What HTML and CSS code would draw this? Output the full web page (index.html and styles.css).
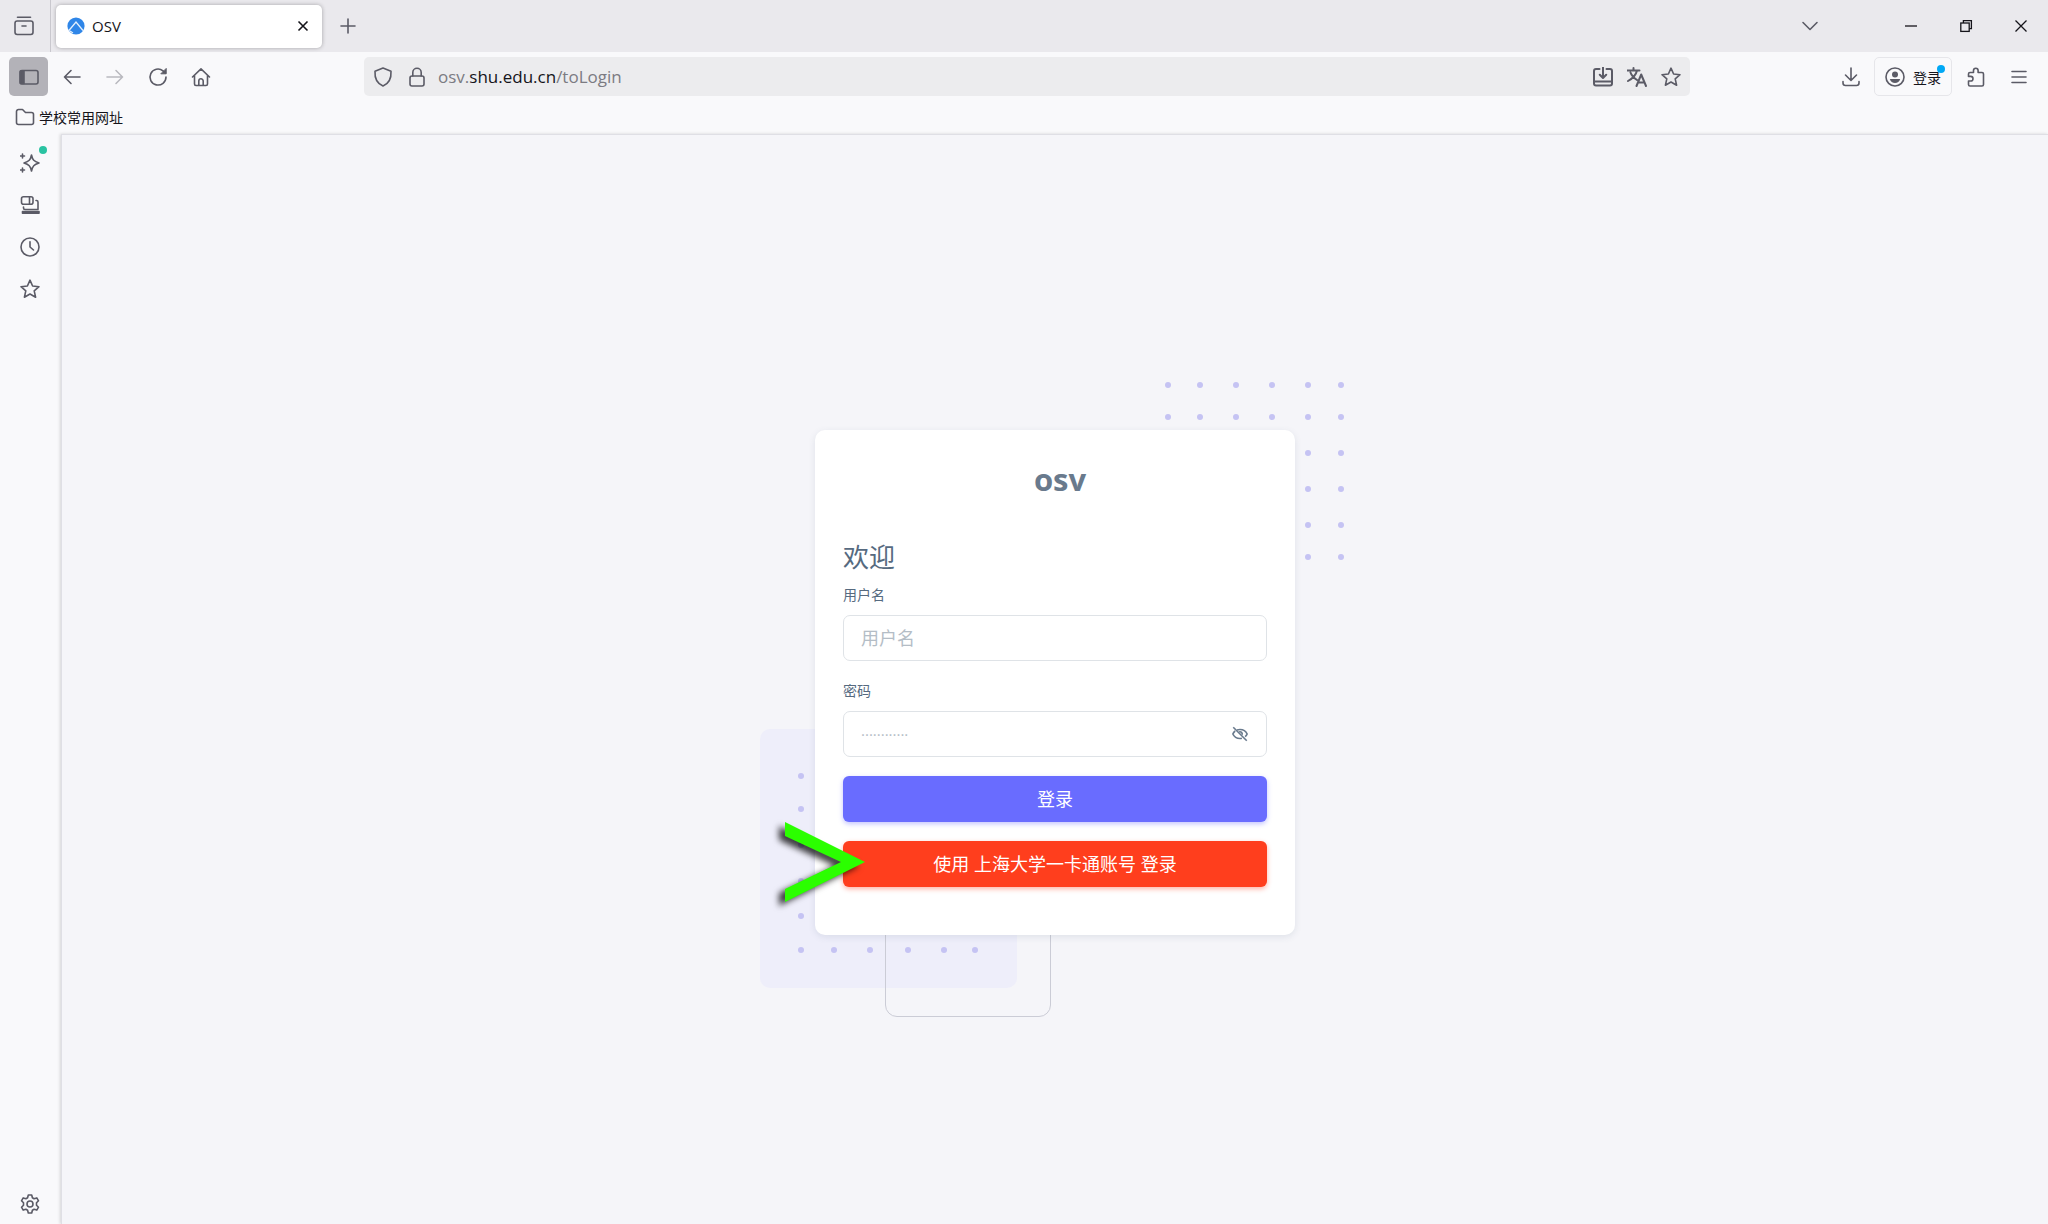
FILE: index.html
```html
<!DOCTYPE html>
<html lang="zh-CN">
<head>
  <meta charset="UTF-8">
  <meta name="viewport" content="width=device-width, initial-scale=1.0">
  <title>OSV</title>
  <link rel="stylesheet" href="styles.css">
</head>
<body>
  <header class="browser">
    <div class="tab-strip">
      <button class="tool-btn view-btn" aria-label="Firefox View">
        <svg class="icon" viewBox="0 0 20 20"><path d="M3.5 1.2h13"/><rect x="1" y="5" width="18" height="13.5" rx="2.2"/><path d="M8 10h4"/></svg>
      </button>
      <div class="tab">
        <svg class="favicon" viewBox="0 0 18 18"><circle cx="9" cy="9" r="8.6" fill="#2f86e8"/><path d="M1.5 14L9 5l7 8.5M6 16l-3-2" fill="none" stroke="#e4f0fd" stroke-width="1.3"/></svg>
        <span class="tab-title">OSV</span>
        <button class="tab-close" aria-label="Close tab">
          <svg viewBox="0 0 12 12"><path d="M1.5 1.5l9 9M10.5 1.5l-9 9"/></svg>
        </button>
      </div>
      <button class="tool-btn" aria-label="New tab">
        <svg class="icon" viewBox="0 0 20 20"><path d="M10 3v14M3 10h14"/></svg>
      </button>
      <button class="tool-btn list-btn" aria-label="List all tabs">
        <svg class="icon" viewBox="0 0 20 20"><path d="M3 6.5l7 7 7-7"/></svg>
      </button>
      <div class="window-btns">
        <button aria-label="Minimize"><svg viewBox="0 0 14 14"><path d="M1 7h12"/></svg></button>
        <button aria-label="Restore"><svg viewBox="0 0 14 14"><rect x="1.8" y="4" width="8.4" height="8.4"/><path d="M4.4 4V1.6h8v8h-2.2"/></svg></button>
        <button aria-label="Close"><svg viewBox="0 0 14 14"><path d="M1.5 1.5l11 11M12.5 1.5l-11 11"/></svg></button>
      </div>
    </div>

    <div class="toolbar">
      <nav class="nav-btns">
        <button class="tool-btn active" aria-label="Sidebar">
          <svg class="icon" viewBox="0 0 20 20"><rect x="1" y="3.5" width="18" height="13.5" rx="2"/><path d="M1.5 4H5v12.5H1.5z" fill="#5b5b66"/></svg>
        </button>
        <button class="tool-btn" aria-label="Back">
          <svg class="icon" viewBox="0 0 20 20"><path d="M18 10H2.5M9 3.500L2.500 10 9 16.500"/></svg>
        </button>
        <button class="tool-btn" aria-label="Forward" disabled>
          <svg class="icon" viewBox="0 0 20 20"><path d="M2 10h15.5M11 3.500l6.500 6.500-6.500 6.500"/></svg>
        </button>
        <button class="tool-btn" aria-label="Reload">
          <svg class="icon" viewBox="0 0 20 20"><path d="M18 10a8 8 0 1 1-3-6.200l2.500 2.200"/><path d="M18.2 1.8v5h-5z" fill="#5b5b66" stroke-width="1"/></svg>
        </button>
        <button class="tool-btn" aria-label="Home">
          <svg class="icon" viewBox="0 0 20 20"><path d="M1.5 10L10 1.8l8.5 8.200M3.500 8.500V17A1.500 1.500 0 0 0 5 18.500h10a1.500 1.500 0 0 0 1.500-1.500V8.500M7.800 18.500V14a2.200 2.200 0 0 1 4.400 0v4.500"/></svg>
        </button>
      </nav>
      <div class="url-bar">
        <svg class="icon" viewBox="0 0 20 20"><path d="M10 1L2 4.200c-.4 6.500 1.500 12 8 14.800 6.500-2.800 8.400-8.300 8-14.800z"/></svg>
        <svg class="icon" viewBox="0 0 20 20"><rect x="3" y="9" width="14" height="10" rx="2"/><path d="M5.800 9V5.500a4.200 4.200 0 0 1 8.400 0V9"/></svg>
        <div class="url">osv.<b>shu.edu.cn</b>/toLogin</div>
        <button class="url-btn" aria-label="Install"><svg class="icon bold" viewBox="0 0 20 20"><path d="M6.500 2H3a2 2 0 0 0-2 2v12.500a2 2 0 0 0 2 2h14a2 2 0 0 0 2-2V4a2 2 0 0 0-2-2h-3.500M1 14.500h18M10 .5v10M6.800 7.800L10 11l3.200-3.200"/></svg></button>
        <button class="url-btn" aria-label="Translate"><svg class="icon bold" viewBox="0 0 20 20"><path d="M.5 3.500h12M6.500 1v2.500M10 3.500C9 8 5.500 11.500 1 14M3.500 5.500c1 3 3.500 5.500 6.500 7.500M9.500 19l4.700-11.500L19 19M11 15.500h6.500"/></svg></button>
        <button class="url-btn" aria-label="Bookmark"><svg class="icon" viewBox="0 0 20 20"><path d="M10 1.200l2.600 5.800 6.400.7-4.800 4.200 1.400 6.300L10 15l-5.600 3.200 1.400-6.300L1 7.700 7.400 7z"/></svg></button>
      </div>
      <div class="menu-btns">
        <button class="tool-btn" aria-label="Downloads"><svg class="icon" viewBox="0 0 20 20"><path d="M10 1v12M4.500 8l5.500 5.500L15.500 8M2 14.500V16a2.500 2.500 0 0 0 2.500 2.500h11A2.500 2.500 0 0 0 18 16v-1.500"/></svg></button>
        <button class="account-btn">
          <svg class="icon" viewBox="0 0 20 20"><circle cx="10" cy="10" r="9"/><circle cx="10" cy="7.500" r="3" fill="#5b5b66" stroke="none"/><path d="M4.800 12h10.400c-.7 2.800-2.800 4-5.200 4s-4.500-1.200-5.200-4z" fill="#5b5b66" stroke="none"/></svg>
          <span>登录</span>
          <i class="dot"></i>
        </button>
        <button class="tool-btn" aria-label="Extensions"><svg class="icon" viewBox="0 0 20 20"><path d="M2.500 8.500V7A1.500 1.500 0 0 1 4 5.500h3.500v-2a2.300 2.300 0 0 1 4.600 0v2H16A1.500 1.500 0 0 1 17.500 7v10.500A1.500 1.500 0 0 1 16 19H4a1.500 1.500 0 0 1-1.500-1.500V14h2.200a2.300 2.300 0 0 0 0-4.600H2.500z"/></svg></button>
        <button class="tool-btn" aria-label="Menu"><svg class="icon" viewBox="0 0 20 20"><path d="M3 4.500h14M3 10h14M3 15.500h14"/></svg></button>
      </div>
    </div>

    <div class="bookmarks">
      <a href="#" class="bookmark">
        <svg class="icon" viewBox="0 0 20 20"><path d="M1.500 15.500v-11a2 2 0 0 1 2-2h4l3 3h6a2 2 0 0 1 2 2v8a2 2 0 0 1-2 2h-13a2 2 0 0 1-2-2z"/></svg>
        <span>学校常用网址</span>
      </a>
    </div>
  </header>

  <div class="window">
    <aside class="sidebar">
      <button class="side-btn" aria-label="AI chat">
        <svg class="icon" viewBox="0 0 20 20"><path d="M11.500 2c1 5 2.500 6.500 7.500 8-5 1.500-6.500 3-7.500 8-1-5-2.500-6.500-7.500-8 5-1.500 6.500-3 7.500-8zM2.500 1v4M.5 3h4M2.500 15v4M.5 17h4"/></svg>
        <i class="dot green"></i>
      </button>
      <button class="side-btn" aria-label="Synced tabs">
        <svg class="icon" viewBox="0 0 20 20"><rect x="1.500" y="1.800" width="11.500" height="7.500" rx="2"/><path d="M9.500 2v7M16 5.500h.5A1.500 1.500 0 0 1 18 7v7.500H5a1.500 1.500 0 0 1-1.500-1.500v-1"/><path d="M2.500 16.500h16.500v1.800H2.500z" fill="#5b5b66"/></svg>
      </button>
      <button class="side-btn" aria-label="History">
        <svg class="icon" viewBox="0 0 20 20"><circle cx="10" cy="10" r="9"/><path d="M10 4.800V10l3.500 3"/></svg>
      </button>
      <button class="side-btn" aria-label="Bookmarks">
        <svg class="icon" viewBox="0 0 20 20"><path d="M10 1.200l2.600 5.800 6.400.7-4.800 4.200 1.400 6.300L10 15l-5.600 3.200 1.400-6.300L1 7.700 7.400 7z"/></svg>
      </button>
      <button class="side-btn settings" aria-label="Settings">
        <svg class="icon" viewBox="0 0 20 20"><circle cx="10" cy="10" r="3"/><path d="M8.300 1h3.400l.7 2.700 1.700 1 2.700-.8 1.700 2.900-2 2v2.400l2 2-1.700 2.900-2.700-.8-1.700 1-.7 2.700H8.300l-.7-2.700-1.700-1-2.700.8-1.700-2.900 2-2V8.800l-2-2 1.700-2.900 2.700.8 1.700-1z"/></svg>
      </button>
    </aside>

    <main class="page">
      <div class="login">
        <svg class="shape dots-top" viewBox="0 0 180 180">
          <defs>
            <g id="row-top"><circle cx="3" cy="3" r="3"/><circle cx="35" cy="3" r="3"/><circle cx="71" cy="3" r="3"/><circle cx="107" cy="3" r="3"/><circle cx="143" cy="3" r="3"/><circle cx="176" cy="3" r="3"/></g>
          </defs>
          <use href="#row-top"/><use href="#row-top" y="32"/><use href="#row-top" y="68"/><use href="#row-top" y="104"/><use href="#row-top" y="140"/><use href="#row-top" y="172"/>
        </svg>
        <div class="shape square"></div>
        <svg class="shape dots-bottom" viewBox="0 0 180 180">
          <defs>
            <g id="row-bottom"><circle cx="3" cy="3" r="3"/><circle cx="36" cy="3" r="3"/><circle cx="72" cy="3" r="3"/><circle cx="110" cy="3" r="3"/><circle cx="146" cy="3" r="3"/><circle cx="177" cy="3" r="3"/></g>
          </defs>
          <use href="#row-bottom"/><use href="#row-bottom" y="33"/><use href="#row-bottom" y="69"/><use href="#row-bottom" y="105"/><use href="#row-bottom" y="140"/><use href="#row-bottom" y="174"/>
        </svg>
        <div class="shape outline"></div>

        <form class="card">
          <h1 class="brand">osv</h1>
          <h2 class="welcome">欢迎</h2>
          <div class="field">
            <label for="username">用户名</label>
            <input type="text" id="username" placeholder="用户名">
          </div>
          <div class="field">
            <label for="password">密码</label>
            <div class="password">
              <input type="password" id="password" placeholder="············">
              <button type="button" class="toggle" aria-label="显示密码">
                <svg viewBox="0 0 24 24"><path d="M3 3l18 18"/><path d="M8 6.800C9.200 6.300 10.600 6 12 6c4.500 0 8 2.600 9.500 6-.6 1.400-1.500 2.600-2.700 3.600M5.600 8C4.200 9 3.100 10.400 2.500 12c1.500 3.400 5 6 9.500 6 .9 0 1.700-.1 2.500-.3M11 9.200a3 3 0 0 1 3.800 3.800"/></svg>
              </button>
            </div>
          </div>
          <button type="submit" class="btn btn-primary">登录</button>
          <a href="#" class="btn btn-danger">使用 上海大学一卡通账号 登录</a>
        </form>

        <svg class="shape arrow" viewBox="0 0 80 80"><path d="M0 0l80 40L0 80V67l56-27L0 14z"/></svg>
      </div>
    </main>
  </div>
</body>
</html>
```
FILE: styles.css
```css
* {
  margin: 0;
  padding: 0;
  box-sizing: border-box;
}

:root {
  --chrome: #f9f9fb;
  --strip: #eae9ed;
  --icon: #5b5b66;
  --page: #f5f5f9;
  --body: #697a8d;
  --heading: #566a7f;
  --border: #dfe3e7;
  --primary: #696cff;
  --danger: #ff3e1d;
}

body {
  display: flex;
  flex-direction: column;
  min-height: 100vh;
  background: var(--chrome);
  color: #15141a;
  font-family: "Open Sans", "Noto Sans CJK SC", sans-serif;
  font-size: 14px;
}

button {
  border: none;
  background: none;
  font: inherit;
  color: inherit;
}

a {
  color: inherit;
  text-decoration: none;
}

svg {
  display: block;
}

.icon {
  flex: none;
  width: 20px;
  height: 20px;
  fill: none;
  stroke: var(--icon);
  stroke-width: 1.6;
  stroke-linecap: round;
  stroke-linejoin: round;
}

.icon.bold {
  stroke-width: 2;
}

/* Tab strip */
.tab-strip {
  display: flex;
  align-items: center;
  height: 52px;
  background: var(--strip);
}

.tool-btn {
  display: flex;
  align-items: center;
  justify-content: center;
  width: 39px;
  height: 39px;
  border-radius: 5px;
}

.tool-btn:disabled {
  opacity: 0.4;
}

.tool-btn.active {
  background: #b3b2b8;
}

.view-btn {
  width: 51px;
  height: 52px;
  padding-right: 2px;
  border-right: 1px solid #c9c8ce;
  border-radius: 0;
}

.tab {
  display: flex;
  align-items: center;
  gap: 7px;
  width: 266px;
  height: 43px;
  margin: 0 6px 0 5px;
  padding: 0 13px 0 11px;
  background: #fff;
  border-radius: 5px;
  box-shadow: 0 0 4px rgba(0, 0, 0, 0.3);
}

.favicon {
  width: 18px;
  height: 18px;
}

.tab-title {
  flex: 1;
  font-size: 15px;
}

.tab-close svg {
  width: 12px;
  height: 12px;
  stroke: #15141a;
  stroke-width: 1.6;
}

.list-btn {
  margin-left: auto;
  margin-right: 54px;
}

.window-btns {
  display: flex;
}

.window-btns button {
  display: flex;
  align-items: center;
  justify-content: center;
  width: 55px;
  height: 52px;
}

.window-btns svg {
  width: 14px;
  height: 14px;
  fill: none;
  stroke: #15141a;
  stroke-width: 1.3;
}

/* Toolbar */
.toolbar {
  display: flex;
  align-items: center;
  height: 49px;
  padding: 0 10px 0 9px;
}

.nav-btns,
.menu-btns {
  display: flex;
  gap: 4px;
}

.url-bar {
  display: flex;
  flex: 1;
  align-items: center;
  gap: 14px;
  height: 39px;
  margin: 0 141px 0 144px;
  padding: 0 9px;
  background: #ececee;
  border-radius: 5px;
}

.url {
  flex: 1;
  margin-left: -3px;
  color: #7b7b82;
  font-size: 17px;
}

.url b {
  color: #15141a;
  font-weight: 400;
}

.account-btn {
  position: relative;
  display: flex;
  align-items: center;
  gap: 8px;
  height: 39px;
  padding: 0 10px;
  border: 1px solid #e6e6ea;
  border-radius: 5px;
}

.dot {
  position: absolute;
  top: 7px;
  right: 6px;
  width: 8px;
  height: 8px;
  border-radius: 50%;
  background: #00a8f5;
}

.dot.green {
  top: 2px;
  right: 2px;
  background: #2ac3a2;
}

.bookmarks {
  height: 33px;
  padding: 4px 15px;
}

.bookmark {
  display: inline-flex;
  align-items: center;
  gap: 4px;
  height: 24px;
}

/* Sidebar */
.window {
  display: flex;
  flex: 1;
}

.sidebar {
  display: flex;
  flex-direction: column;
  align-items: center;
  gap: 4px;
  width: 61px;
  padding: 10px 1px 1px 0;
}

.side-btn {
  position: relative;
  display: flex;
  align-items: center;
  justify-content: center;
  width: 38px;
  height: 38px;
}

.side-btn.settings {
  margin-top: auto;
}

/* Page */
.page {
  display: flex;
  flex: 1;
  align-items: center;
  justify-content: center;
  padding-top: 6px;
  background: var(--page);
  border: solid #dfdfe5;
  border-width: 1px 0 0 1px;
  box-shadow: -1px 0 3px rgba(0, 0, 0, 0.15);
}

.login {
  position: relative;
  width: 480px;
}

.card {
  position: relative;
  display: flex;
  flex-direction: column;
  padding: 28px 28px 48px;
  background: #fff;
  border-radius: 10px;
  box-shadow: 0 2px 7px rgba(67, 89, 113, 0.12);
  color: var(--body);
}

.brand {
  padding-left: 10px;
  margin-bottom: 37px;
  font-size: 31px;
  line-height: 42px;
  text-align: center;
}

.welcome {
  margin-bottom: 7px;
  color: var(--heading);
  font-size: 26px;
  font-weight: 400;
  line-height: 40px;
}

.field {
  margin-bottom: 19px;
}

.field label {
  display: block;
  margin-bottom: 9px;
  color: var(--heading);
  line-height: 22px;
}

.field input {
  display: block;
  width: 100%;
  height: 46px;
  padding: 0 17px;
  border: 1px solid var(--border);
  border-radius: 7px;
  color: var(--body);
  font-family: inherit;
  font-size: 18px;
}

.field input::placeholder {
  color: #b4bdc6;
}

.field input[type="password"] {
  font-size: 15px;
}

.password {
  position: relative;
}

.toggle {
  position: absolute;
  top: 14px;
  right: 18px;
}

.toggle svg {
  width: 18px;
  height: 18px;
  fill: none;
  stroke: var(--body);
  stroke-width: 2.2;
}

.btn {
  height: 46px;
  border-radius: 6px;
  color: #fff;
  font-size: 18px;
  line-height: 46px;
  text-align: center;
}

.btn-primary {
  margin-bottom: 19px;
  background: var(--primary);
  box-shadow: 0 2px 5px rgba(105, 108, 255, 0.4);
}

.btn-danger {
  background: var(--danger);
  box-shadow: 0 2px 5px rgba(255, 62, 29, 0.4);
}

/* Decorations around the card */
.shape {
  position: absolute;
}

.dots-top,
.dots-bottom {
  width: 180px;
  height: 180px;
  fill: #c5c3f3;
}

.dots-top {
  top: -48px;
  right: -50px;
}

.dots-bottom {
  bottom: -18px;
  left: -17px;
}

.square {
  bottom: -53px;
  left: -55px;
  width: 257px;
  height: 259px;
  border-radius: 10px;
  background: #eeeefa;
}

.outline {
  bottom: -82px;
  left: 70px;
  width: 166px;
  height: 166px;
  border: 1px solid #cbccd6;
  border-radius: 12px;
}

.arrow {
  bottom: 33px;
  left: -30px;
  width: 80px;
  height: 80px;
  overflow: visible;
  fill: #2bff00;
  filter: drop-shadow(-6px 4px 3px rgba(0, 0, 0, 0.75));
  pointer-events: none;
}
```
